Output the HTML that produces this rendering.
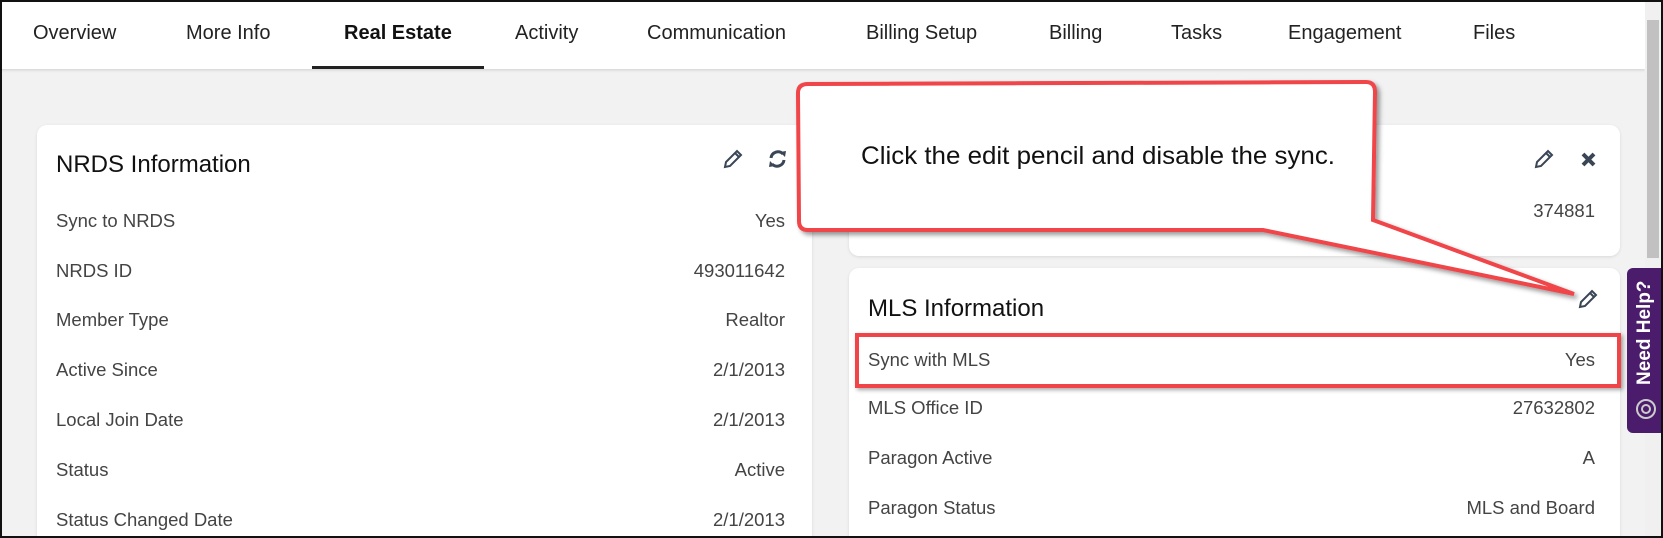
<!DOCTYPE html>
<html style="overflow:hidden;width:1663px;height:538px"><head><meta charset="utf-8"><style>
*{box-sizing:border-box;margin:0;padding:0}
body{width:1663px;height:538px;overflow:hidden;background:#f2f2f2;font-family:"Liberation Sans",Arial,sans-serif;position:relative;color:#333}
.frame{position:absolute;left:0;top:0;width:1663px;height:538px;border:2px solid #111;z-index:20;pointer-events:none}
.tabs{position:absolute;left:0;top:0;width:1645px;height:69px;background:#fff;box-shadow:0 1px 3px rgba(0,0,0,.15)}
.tab{position:absolute;top:22px;font-size:20px;color:#222}
.ul{position:absolute;left:312px;top:66px;width:172px;height:3px;background:#222}
.card{position:absolute;background:#fff;border-radius:10px;box-shadow:0 1px 3px rgba(0,0,0,.1)}
.title{position:absolute;font-size:24px;color:#111}
.lab{position:absolute;font-size:18.5px;color:#444}
.val{position:absolute;font-size:18.5px;color:#444;text-align:right}
.sb{position:absolute;left:1645px;top:2px;width:16px;height:534px;background:#f0f0f0}
.thumb{position:absolute;left:1647px;top:20px;width:12px;height:238px;background:#c1c1c1}
.help{position:absolute;left:1627px;top:268px;width:36px;height:165px;background:#4a1c6b;border-radius:6px 0 0 6px}
.help span{position:absolute;left:-32px;top:56px;transform:rotate(-90deg);color:#fff;font-weight:bold;font-size:19px;white-space:nowrap;width:100px}
</style></head><body>
<div class="tabs">
<div class="tab" style="left:33px">Overview</div>
<div class="tab" style="left:186px">More Info</div>
<div class="tab" style="left:344px;font-weight:bold;color:#111">Real Estate</div>
<div class="tab" style="left:515px">Activity</div>
<div class="tab" style="left:647px">Communication</div>
<div class="tab" style="left:866px">Billing Setup</div>
<div class="tab" style="left:1049px">Billing</div>
<div class="tab" style="left:1171px">Tasks</div>
<div class="tab" style="left:1288px">Engagement</div>
<div class="tab" style="left:1473px">Files</div>
<div class="ul"></div>
</div>

<div class="card" style="left:37px;top:125px;width:775px;height:413px;border-radius:10px 10px 0 0"></div>
<div class="title" style="left:56px;top:151px">NRDS Information</div>
<svg style="position:absolute;left:722px;top:149px" width="22" height="20" viewBox="0 0 22 20"><path d="M3 18 L4 13 L15 2 L19 6 L8 17 Z M13 4 L17 8" fill="none" stroke="#3a4555" stroke-width="2"/></svg>
<svg style="position:absolute;left:767px;top:149px" width="21" height="20" viewBox="0 0 21 20"><path d="M4 9 A7 7 0 0 1 16 5 M17 11 A7 7 0 0 1 5 15" fill="none" stroke="#3a4555" stroke-width="3"/><path d="M13 3 L19 2 L18 8 Z M8 17 L2 18 L3 12 Z" fill="#3a4555"/></svg>
<div class="lab" style="left:56px;top:210px">Sync to NRDS</div><div class="val" style="right:878px;top:210px">Yes</div>
<div class="lab" style="left:56px;top:260px">NRDS ID</div><div class="val" style="right:878px;top:260px">493011642</div>
<div class="lab" style="left:56px;top:309px">Member Type</div><div class="val" style="right:878px;top:309px">Realtor</div>
<div class="lab" style="left:56px;top:359px">Active Since</div><div class="val" style="right:878px;top:359px">2/1/2013</div>
<div class="lab" style="left:56px;top:409px">Local Join Date</div><div class="val" style="right:878px;top:409px">2/1/2013</div>
<div class="lab" style="left:56px;top:459px">Status</div><div class="val" style="right:878px;top:459px">Active</div>
<div class="lab" style="left:56px;top:509px">Status Changed Date</div><div class="val" style="right:878px;top:509px">2/1/2013</div>

<div class="card" style="left:849px;top:125px;width:771px;height:131px"></div>
<svg style="position:absolute;left:1533px;top:149px" width="22" height="20" viewBox="0 0 22 20"><path d="M3 18 L4 13 L15 2 L19 6 L8 17 Z M13 4 L17 8" fill="none" stroke="#3a4555" stroke-width="2"/></svg>
<svg style="position:absolute;left:1580px;top:151px" width="17" height="17" viewBox="0 0 17 17"><path d="M3 3 L14 14 M14 3 L3 14" stroke="#3a4555" stroke-width="4"/></svg>
<div class="val" style="right:68px;top:200px">374881</div>

<div class="card" style="left:849px;top:268px;width:771px;height:270px;border-radius:10px 10px 0 0"></div>
<div class="title" style="left:868px;top:295px">MLS Information</div>
<svg style="position:absolute;left:1577px;top:289px" width="22" height="20" viewBox="0 0 22 20"><path d="M3 18 L4 13 L15 2 L19 6 L8 17 Z M13 4 L17 8" fill="none" stroke="#3a4555" stroke-width="2"/></svg>
<div class="lab" style="left:868px;top:349px">Sync with MLS</div><div class="val" style="right:68px;top:349px">Yes</div>
<div class="lab" style="left:868px;top:397px">MLS Office ID</div><div class="val" style="right:68px;top:397px">27632802</div>
<div class="lab" style="left:868px;top:447px">Paragon Active</div><div class="val" style="right:68px;top:447px">A</div>
<div class="lab" style="left:868px;top:497px">Paragon Status</div><div class="val" style="right:68px;top:497px">MLS and Board</div>
<div style="position:absolute;left:855px;top:333px;width:766px;height:55px;border:4px solid #f04448;box-shadow:2px 2px 4px rgba(0,0,0,.35)"></div>

<svg style="position:absolute;left:0;top:0" width="1663" height="538">
<defs><filter id="sh" x="-5%" y="-5%" width="110%" height="120%"><feDropShadow dx="3" dy="3" stdDeviation="2.5" flood-color="#000" flood-opacity=".4"/></filter></defs>
<path d="M808 84 L1366 82 Q1375 82 1375 92 L1373 220 L1574 294 L1263 230 L808 230 Q799 230 799 221 L798 93 Q798 84 808 84 Z" fill="#fff" stroke="#f04448" stroke-width="4" stroke-linejoin="miter" filter="url(#sh)"/>
<text x="861" y="164" font-family="Liberation Sans,Arial,sans-serif" font-size="25" textLength="474" lengthAdjust="spacingAndGlyphs" fill="#111">Click the edit pencil and disable the sync.</text>
</svg>

<div class="sb"></div><div class="thumb"></div>
<div class="help"><span>Need Help?</span>
<svg style="position:absolute;left:8px;top:130px" width="22" height="22" viewBox="0 0 22 22"><circle cx="11" cy="11" r="9" fill="none" stroke="#ccc" stroke-width="2"/><circle cx="11" cy="11" r="4" fill="none" stroke="#ccc" stroke-width="2"/></svg>
</div>
<div class="frame"></div>
</body></html>
